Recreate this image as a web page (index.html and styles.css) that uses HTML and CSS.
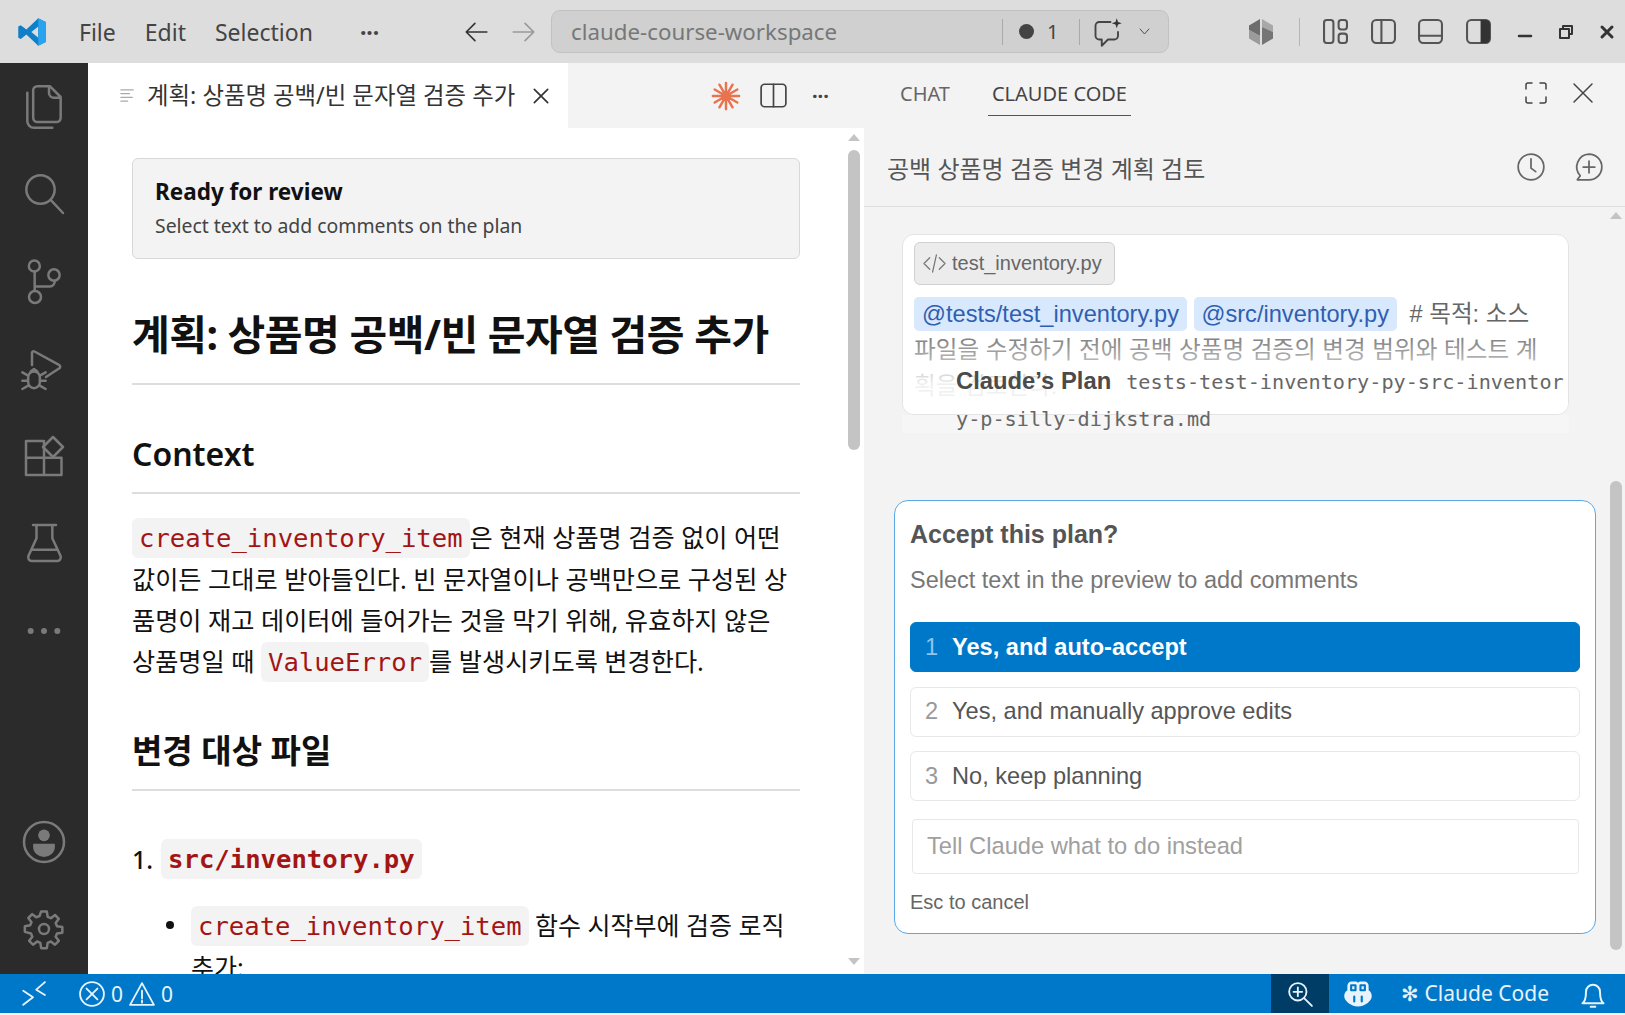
FILE: index.html
```html
<!DOCTYPE html>
<html lang="ko">
<head>
    <meta charset="UTF-8">
    <meta name="viewport" content="width=device-width, initial-scale=1.0">
    <title>claude-course-workspace</title>
    <link rel="stylesheet" href="styles.css">
</head>
<body>
    <div class="titlebar">
        <svg class="logo" viewBox="0 0 24 24"><path fill="#0f7fc9" d="M17 1l6 3v16l-6 3L7.5 14 3 17.5 1 16.5v-9L3 6.500 7.5 10zM17 7.500L11.5 12l5.5 4.5z"/><path fill="#2aa3ee" d="M17 1l6 3v16l-6 3z"/></svg>
        <div class="menu">
            <span>File</span>
            <span>Edit</span>
            <span>Selection</span>
            <span class="menu-more">···</span>
        </div>
        <div class="nav">
            <svg class="ico" viewBox="0 0 24 24"><path d="M22 12H3M11 4l-8 8 8 8"/></svg>
            <svg class="ico dim" viewBox="0 0 24 24"><path d="M2 12h19M13 4l8 8-8 8"/></svg>
        </div>
        <div class="command">
            <span class="command-text">claude-course-workspace</span>
            <span class="command-sep"></span>
            <span class="dot"></span>
            <span class="command-num">1</span>
            <span class="command-sep"></span>
            <svg class="ico chat-ico" viewBox="0 0 24 24"><path d="M14 4H5a3 3 0 0 0-3 3v8a3 3 0 0 0 3 3h2v5l5-5h5a3 3 0 0 0 3-3v-3"/><path class="fill" d="M19 1l1 3 3 1-3 1-1 3-1-3-3-1 3-1z"/></svg>
            <svg class="ico chev" viewBox="0 0 24 24"><path d="M5 8l7 8 7-8"/></svg>
        </div>
        <div class="title-right">
            <svg class="gem" viewBox="0 0 28 28"><path fill="#6d6d6d" d="M13 1L2 7.5V12l11 6z"/><path fill="#9b9b9b" d="M2 12l11 6v9L2 20.500z"/><path fill="#a8a8a8" d="M15 1l11 6.500V14L15 9z"/><path fill="#757575" d="M15 9l11 5v6.500L15 27z"/></svg>
            <span class="title-sep"></span>
            <div class="layout-btns">
                <svg class="ico lay" viewBox="0 0 24 24"><rect x="1" y="1" width="9" height="22" rx="2.5"/><rect x="15" y="1" width="8" height="9" rx="2.5"/><rect x="15" y="14" width="8" height="9" rx="2.5"/></svg>
                <svg class="ico lay" viewBox="0 0 24 24"><rect x="1" y="1" width="22" height="22" rx="4"/><path d="M10 1v22"/></svg>
                <svg class="ico lay" viewBox="0 0 24 24"><rect x="1" y="1" width="22" height="22" rx="4"/><path d="M1 16h22"/></svg>
                <svg class="ico lay" viewBox="0 0 24 24"><rect x="1" y="1" width="22" height="22" rx="4"/><path class="fill" d="M14 1h5a4 4 0 0 1 4 4v14a4 4 0 0 1-4 4h-5z"/></svg>
            </div>
            <div class="window-btns">
                <svg class="win" viewBox="0 0 14 14"><path d="M1 11h12"/></svg>
                <svg class="win thin" viewBox="0 0 14 14"><path d="M4 4V1h9v8h-3M1 4h9v9H1z"/></svg>
                <svg class="win bold" viewBox="0 0 14 14"><path d="M2 2l10 10M12 2L2 12"/></svg>
            </div>
        </div>
    </div>

    <div class="workbench">
        <div class="activity">
            <div class="activity-top">
                <svg class="act" viewBox="0 0 24 24"><path d="M8-.5h7.500l6.500 6.500v12.500a2.500 2.500 0 0 1-2.500 2.500H8a2.500 2.500 0 0 1-2.500-2.500V2A2.500 2.500 0 0 1 8-.5zM15-.5v4a3 3 0 0 0 3 3h4"/><path d="M2 3.500v17a4 4 0 0 0 4 4h11"/></svg>
                <svg class="act" viewBox="0 0 24 24"><circle cx="9.900" cy="9.300" r="8.500"/><path d="M16 15.500l7.400 7.900"/></svg>
                <svg class="act" viewBox="0 0 24 24"><circle cx="6.200" cy="2.400" r="3.300"/><circle cx="6.600" cy="21" r="3.600"/><circle cx="18" cy="7.800" r="3.400"/><path d="M6.400 5.700v11.700M6.400 14.700h9a3 3 0 0 0 3-3.500"/></svg>
                <svg class="act" viewBox="0 0 24 24"><path d="M4.800 9.600V2.500a1 1 0 0 1 1.500-1L21 9.500a1.200 1.200 0 0 1 0 2.200L13.200 16.800"/><path d="M2.500 17a3.500 3.500 0 0 1 7 0v3a3.500 3.500 0 0 1-7 0zM-1 14l3.500 2M-1 19h3.500M-1 24l3.500-2M13 14l-3.500 2M13 19H9.500M13 24l-3.500-2M4 13.500L6 12l2 1.500"/></svg>
                <svg class="act" viewBox="0 0 24 24"><path d="M1.200 3H12v20.400H1.200zM1.200 13h21.300v10.400H12M12 13v-3"/><path d="M17.400.600l6 6-6 6-6-6z"/></svg>
                <svg class="act" viewBox="0 0 24 24"><path d="M5.400 1.200h13.800M7.500 1.200v8L2.800 19.500a2.200 2.200 0 0 0 2 3.300h15a2.200 2.200 0 0 0 2-3.300L17 9.200v-8M5.200 16h14.200"/></svg>
                <svg class="act small" viewBox="0 0 24 24"><circle class="fill" cx="4" cy="12" r="1.800"/><circle class="fill" cx="12" cy="12" r="1.800"/><circle class="fill" cx="20" cy="12" r="1.800"/></svg>
            </div>
            <div class="activity-bottom">
                <svg class="act" viewBox="0 0 24 24"><circle cx="12" cy="12" r="12"/><circle class="fill" cx="12" cy="8" r="3.500"/><path class="fill" d="M5.500 13h13v2a6.500 6 0 0 1-13 0z"/></svg>
                <svg class="act" viewBox="0 0 24 24"><path d="M10.300 1.500h3.400l.5 3.200 1.900.8 2.500-1.900 2.300 2.300-1.900 2.500.8 1.900 3.200.5v3.400l-3.200.5-.8 1.900 1.900 2.500-2.300 2.300-2.500-1.900-1.900.8-.5 3.200h-3.400l-.5-3.200-1.900-.8-2.500 1.900-2.300-2.300 1.900-2.500-.8-1.900L.5 13.700v-3.400l3.200-.5.8-1.900-1.900-2.500 2.300-2.300 2.500 1.900 1.900-.8z"/><circle cx="12" cy="12" r="3"/></svg>
            </div>
        </div>

        <div class="editor">
            <div class="tabs">
                <div class="tab">
                    <svg class="tab-ico" viewBox="0 0 16 16"><path d="M1 2h13M1 6h9M1 10h12M1 14h7"/></svg>
                    <span class="tab-title">계획: 상품명 공백/빈 문자열 검증 추가</span>
                    <svg class="ico tab-close" viewBox="0 0 24 24"><path d="M4 4l16 16M20 4L4 20"/></svg>
                </div>
                <div class="tab-actions">
                    <svg class="spark" viewBox="0 0 32 32"><path d="M30 16H2M28.100 9L3.900 23M23 3.900L9 28.100M16 2v28M9 3.900l14 24.200M3.900 9l24.200 14"/></svg>
                    <svg class="ico split" viewBox="0 0 24 24"><rect x="1" y="2" width="22" height="20" rx="3"/><path d="M12 2v20"/></svg>
                    <span class="more">···</span>
                </div>
            </div>
            <div class="editor-body">
                <div class="doc">
                    <div class="review">
                        <div class="review-title">Ready for review</div>
                        <div class="review-sub">Select text to add comments on the plan</div>
                    </div>
                    <h1>계획: 상품명 공백/빈 문자열 검증 추가</h1>
                    <h2 class="latin">Context</h2>
                    <p><code>create_inventory_item</code>은 현재 상품명 검증 없이 어떤 값이든 그대로 받아들인다. 빈 문자열이나 공백만으로 구성된 상품명이 재고 데이터에 들어가는 것을 막기 위해, 유효하지 않은<br>상품명일 때 <code>ValueError</code>를 발생시키도록 변경한다.</p>
                    <h2>변경 대상 파일</h2>
                    <div class="file-item"><span class="file-num">1.</span><code class="strong">src/inventory.py</code></div>
                    <div class="bullet">
                        <span class="bullet-dot"></span>
                        <div class="bullet-text"><code>create_inventory_item</code> 함수 시작부에 검증 로직 추가:</div>
                    </div>
                </div>
                <div class="scrollbar">
                    <span class="arrow up"></span>
                    <span class="thumb"></span>
                    <span class="arrow down"></span>
                </div>
            </div>
        </div>

        <div class="panel">
            <div class="panel-tabs">
                <span class="panel-tab">CHAT</span>
                <span class="panel-tab active">CLAUDE CODE</span>
                <div class="panel-tools">
                    <svg class="ico tool" viewBox="0 0 24 24"><path d="M2 8V4a2 2 0 0 1 2-2h4M16 2h4a2 2 0 0 1 2 2v4M22 16v4a2 2 0 0 1-2 2h-4M8 22H4a2 2 0 0 1-2-2v-4"/></svg>
                    <svg class="ico tool" viewBox="0 0 24 24"><path d="M3 3l18 18M21 3L3 21"/></svg>
                </div>
            </div>
            <div class="session">
                <span class="session-title">공백 상품명 검증 변경 계획 검토</span>
                <div class="session-tools">
                    <svg class="ico hist" viewBox="0 0 24 24"><circle cx="12" cy="12" r="11"/><path d="M12 5v8l4 3"/></svg>
                    <svg class="ico hist" viewBox="0 0 24 24"><path d="M12 1a11 11 0 0 1 0 22H2l2.500-3.500A11 11 0 0 1 12 1zM12 7v10M7 12h10"/></svg>
                </div>
            </div>
            <div class="panel-body">
                <div class="thread">
                    <div class="message">
                        <div class="chip"><svg class="chip-ico" viewBox="0 0 24 24"><path d="M7 6l-6 6 6 6M17 6l6 6-6 6M14 3l-4 18"/></svg>test_inventory.py</div>
                        <div class="message-text"><span class="mention">@tests/test_inventory.py</span> <span class="mention">@src/inventory.py</span> <span class="message-plain"># 목적: 소스 파일을 수정하기 전에 공백 상품명 검증의 변경 범위와 테스트 계획을 검토한다.</span></div>
                        <div class="fade"></div>
                    </div>
                    <div class="message-band"></div>
                    <div class="plan-note"><b>Claude’s Plan</b><span>tests-test-inventory-py-src-inventory-p-silly-dijkstra.md</span></div>
                    <div class="accept">
                        <div class="accept-title">Accept this plan?</div>
                        <div class="accept-sub">Select text in the preview to add comments</div>
                        <div class="option selected"><span class="option-num">1</span>Yes, and auto-accept</div>
                        <div class="option"><span class="option-num">2</span>Yes, and manually approve edits</div>
                        <div class="option"><span class="option-num">3</span>No, keep planning</div>
                        <div class="instead">Tell Claude what to do instead</div>
                        <div class="esc">Esc to cancel</div>
                    </div>
                </div>
                <div class="scrollbar panel-scroll">
                    <span class="arrow up"></span>
                    <span class="thumb"></span>
                </div>
            </div>
        </div>
    </div>

    <div class="statusbar">
        <svg class="st remote" viewBox="0 0 24 24"><path d="M3 22l9-7-9-6M23 1l-8 7 8 5"/></svg>
        <div class="st-problems">
            <svg class="st" viewBox="0 0 24 24"><circle cx="12" cy="12" r="11"/><path d="M7 7l10 10M17 7L7 17"/></svg>
            <span>0</span>
            <svg class="st" viewBox="0 0 24 24"><path d="M12 2L1 22h22zM12 9v7M12 18v2"/></svg>
            <span>0</span>
        </div>
        <div class="st-right">
            <div class="st-zoom"><svg class="st" viewBox="0 0 24 24"><circle cx="10" cy="10" r="8"/><path d="M16 16l7 7M10 6v8M6 10h8"/></svg></div>
            <svg class="st copilot" viewBox="0 0 24 24"><path class="stfill" d="M7 2h3a3 3 0 0 1 2 1 3 3 0 0 1 2-1h3a3.500 3.500 0 0 1 3.500 4v3c2 1 2.500 3 2.500 5 0 3-5 8-11 8S1 17 1 14c0-2 .5-4 2.500-5V6A3.500 3.500 0 0 1 7 2z"/><path class="stcut" d="M9 14v4M15 14v4M6.500 5h3.500v4H6.500zM14 5h3.500v4H14z"/></svg>
            <span class="st-claude">✻ Claude Code</span>
            <svg class="st bell" viewBox="0 0 24 24"><path d="M3 20c2.500-2 3-5 3-10a6 6 0 0 1 12 0c0 5 .5 8 3 10zM10 23h4"/></svg>
        </div>
    </div>
</body>
</html>
```

FILE: styles.css
```css
* {
    box-sizing: border-box;
}
html, body {
    height: 100%;
}
body {
    margin: 0;
    overflow: hidden;
    background: #f5f5f5;
    font-family: "Noto Sans", "Noto Sans CJK KR", sans-serif;
    color: #111;
}
svg {
    flex: none;
    display: block;
    overflow: visible;
}
.ico, .act, .st, .win, .tab-ico, .chip-ico {
    fill: none;
    stroke-linecap: round;
    stroke-linejoin: round;
}
.ico {
    stroke: #444;
    stroke-width: 1.5;
    width: 24px;
    height: 24px;
}
.ico .fill {
    fill: #333;
    stroke: none;
}

/* title bar */
.titlebar {
    display: flex;
    align-items: center;
    height: 63px;
    background: #dddddd;
    padding-left: 17px;
}
.logo {
    width: 30px;
    height: 30px;
}
.menu {
    display: flex;
    align-items: center;
    gap: 29px;
    margin-left: 32px;
    width: 384px;
    font-size: 23px;
    color: #444;
}
.menu-more {
    margin-left: 18px;
    font-weight: 700;
}
.nav {
    display: flex;
    gap: 22px;
    margin-right: 14px;
}
.nav .ico {
    width: 26px;
    height: 26px;
    stroke: #333;
}
.nav .dim {
    stroke: #999;
}
.command {
    display: flex;
    align-items: center;
    width: 618px;
    height: 43px;
    padding-left: 19px;
    background: #d0d0d0;
    border: 1px solid #c2c2c2;
    border-radius: 9px;
}
.command-text {
    width: 431px;
    font-size: 22.3px;
    color: #777;
}
.command-sep {
    width: 1px;
    height: 26px;
    background: #aaa;
}
.dot {
    width: 15px;
    height: 15px;
    margin-left: 16px;
    border-radius: 50%;
    background: #444;
}
.command-num {
    width: 32px;
    margin-left: 13px;
    font-size: 20px;
    color: #444;
}
.chat-ico {
    width: 30px;
    height: 30px;
    margin-left: 13px;
}
.chev {
    width: 15px;
    height: 15px;
    margin-left: 14px;
}
.title-right {
    display: flex;
    align-items: center;
    margin-left: 78px;
}
.gem {
    width: 28px;
    height: 28px;
}
.title-sep {
    width: 1px;
    height: 28px;
    margin: 0 23px 0 24px;
    background: #b5b5b5;
}
.layout-btns {
    display: flex;
    gap: 22.6px;
}
.lay {
    width: 25px;
    height: 25px;
    stroke: #555;
    stroke-width: 2;
}
.window-btns {
    display: flex;
    align-items: center;
    gap: 27px;
    margin-left: 27px;
}
.win {
    width: 14px;
    height: 14px;
    stroke: #333;
    stroke-width: 2.5;
}
.win.thin {
    stroke-width: 2;
}
.win.bold {
    stroke-width: 3;
}

/* main area */
.workbench {
    display: flex;
    height: 911px;
}
.activity {
    display: flex;
    flex-direction: column;
    justify-content: space-between;
    width: 88px;
    padding: 24px 0 25px;
    background: #2b2b2b;
}
.activity-top, .activity-bottom {
    display: flex;
    flex-direction: column;
    align-items: center;
    gap: 47.3px;
}
.activity-bottom {
    gap: 47px;
}
.act {
    width: 40px;
    height: 40px;
    stroke: #7a7a7a;
    stroke-width: 1.5;
}
.act .fill {
    fill: #7a7a7a;
    stroke: none;
}

/* editor */
.editor {
    display: flex;
    flex-direction: column;
    width: 776px;
    background: #fff;
}
.tabs {
    display: flex;
    height: 65px;
    background: #f3f3f3;
}
.tab {
    display: flex;
    align-items: center;
    width: 480px;
    padding-left: 32px;
    background: #fff;
}
.tab-ico {
    width: 15px;
    height: 15px;
    stroke: #aaa;
    stroke-width: 1.5;
}
.tab-title {
    margin: 0 0 4px 12px;
    font-size: 23.4px;
    color: #333;
    white-space: nowrap;
}
.tab-close {
    width: 20px;
    height: 20px;
    margin-left: 16px;
    stroke: #333;
    stroke-width: 2;
}
.tab-actions {
    display: flex;
    align-items: center;
    gap: 19px;
    padding-left: 143px;
}
.spark {
    width: 30px;
    height: 30px;
    fill: none;
    stroke: #e8734f;
    stroke-width: 2.6;
    stroke-linecap: round;
}
.split {
    width: 27px;
    height: 27px;
}
.more {
    margin-left: 6px;
    font-size: 20px;
    font-weight: 700;
    color: #444;
}
.editor-body {
    display: flex;
    height: 846px;
    overflow: hidden;
}
.doc {
    flex: 1;
    padding: 30px 46px 0 44px;
    overflow: hidden;
}
.review {
    height: 101px;
    padding: 18px 22px 0;
    background: #f3f3f3;
    border: 1px solid #d8d8d8;
    border-radius: 6px;
}
.review-title {
    font-size: 22.5px;
    line-height: 30px;
    font-weight: 700;
}
.review-sub {
    margin-top: 5px;
    font-size: 19.4px;
    line-height: 27px;
    color: #444;
}
h1 {
    margin: 43px 0 0;
    padding-bottom: 17px;
    border-bottom: 2px solid #ddd;
    font-size: 41px;
    line-height: 64px;
    font-weight: 700;
    letter-spacing: -0.5px;
    white-space: nowrap;
}
h2 {
    margin: 0;
    padding-bottom: 14px;
    border-bottom: 2px solid #ddd;
    font-size: 33px;
    line-height: 48px;
    font-weight: 700;
}
h2.latin {
    margin-top: 45px;
    font-size: 32px;
    font-weight: 600;
}
p {
    margin: 23px 0 0;
    font-size: 25.2px;
    line-height: 41px;
}
p + h2 {
    margin-top: 44px;
}
code {
    padding: 5px 7px;
    border-radius: 6px;
    background: #f3f3f3;
    color: #a31515;
    font-family: "DejaVu Sans Mono", monospace;
    font-size: 25.6px;
}
code.strong {
    font-weight: 700;
}
.file-item {
    display: flex;
    align-items: center;
    height: 41px;
    margin-top: 47px;
    font-size: 25px;
    font-weight: 500;
}
.file-num {
    margin-right: 8px;
}
.bullet {
    display: flex;
    margin-top: 26px;
}
.bullet-dot {
    flex: none;
    width: 8px;
    height: 8px;
    margin: 16px 17px 0 34px;
    border-radius: 50%;
    background: #111;
}
.bullet-text {
    font-size: 25px;
    line-height: 41px;
}
.scrollbar {
    display: flex;
    flex-direction: column;
    align-items: center;
    flex: none;
    width: 16px;
    margin-right: 2px;
    padding-top: 6px;
}
.arrow {
    width: 0;
    height: 0;
    border-left: 6px solid transparent;
    border-right: 6px solid transparent;
}
.arrow.up {
    border-bottom: 7px solid #c4c4c4;
}
.arrow.down {
    margin-top: 508px;
    border-top: 7px solid #c4c4c4;
}
.thumb {
    width: 12px;
    height: 300px;
    margin-top: 9px;
    border-radius: 6px;
    background: #c4c4c4;
}

/* right panel */
.panel {
    display: flex;
    flex-direction: column;
    width: 761px;
    background: #f3f3f3;
}
.panel-tabs {
    display: flex;
    height: 63px;
    padding: 0 0 0 32px;
}
.panel-tab {
    height: 53px;
    padding: 16px 4px 0;
    margin-right: 34px;
    font-size: 20px;
    line-height: 30px;
    color: #666;
}
.panel-tab.active {
    color: #444;
    border-bottom: 1px solid #555;
}
.panel-tools {
    display: flex;
    align-items: center;
    gap: 23px;
    margin-left: auto;
    padding: 0 30px 4px 0;
}
.tool {
    width: 24px;
    height: 24px;
}
.session {
    display: flex;
    align-items: center;
    height: 81px;
    padding: 2px 22px 0 23px;
    border-bottom: 1px solid #ddd;
}
.session-title {
    font-size: 24px;
    color: #555;
}
.session-tools {
    display: flex;
    gap: 30px;
    margin-left: auto;
}
.hist {
    width: 28px;
    height: 28px;
    stroke: #666;
}
.panel-body {
    display: flex;
    height: 767px;
    overflow: hidden;
    font-family: "Liberation Sans", "Noto Sans CJK KR", sans-serif;
}
.thread {
    position: relative;
    flex: 1;
    min-width: 0;
    padding: 27px 0 0 30px;
}
.message {
    position: relative;
    height: 181px;
    margin-left: 8px;
    width: 667px;
    padding: 7px 11px 0;
    background: #fff;
    border: 1px solid #e4e4e4;
    border-radius: 12px;
    overflow: hidden;
}
.message-band {
    width: 667px;
    height: 18px;
    margin-left: 8px;
    background: #f6f6f6;
}
.chip {
    display: flex;
    align-items: center;
    gap: 6px;
    width: 201px;
    height: 43px;
    padding-left: 8px;
    background: #ececec;
    border: 1px solid #d0d0d0;
    border-radius: 6px;
    font-size: 20px;
    color: #666;
}
.chip-ico {
    width: 23px;
    height: 23px;
    stroke: #777;
    stroke-width: 1.3;
}
.message-text {
    margin-top: 11px;
    font-size: 23.6px;
    line-height: 36px;
}
.mention {
    padding: 4px 8px;
    border-radius: 5px;
    background: #d8e8fd;
    color: #2f5fb0;
}
.message-plain {
    margin-left: 6px;
    color: #666;
}
.fade {
    position: absolute;
    left: 0;
    right: 0;
    top: 92px;
    height: 88px;
    background: linear-gradient(rgba(255, 255, 255, 0), rgba(255, 255, 255, 0.9) 65%);
}
.plan-note {
    position: absolute;
    left: 60px;
    top: 156px;
    width: 640px;
    padding-left: 32px;
    font-size: 23.8px;
    line-height: 35px;
    font-weight: 700;
    color: #4b4b4b;
    word-break: break-all;
}
.plan-note span {
    margin-left: 15px;
    font-family: "DejaVu Sans Mono", monospace;
    font-size: 20.2px;
    font-weight: 400;
    color: #666;
}
.accept {
    width: 702px;
    height: 434px;
    margin-top: 67px;
    padding: 15px 15px 0;
    background: #fff;
    border: 1.5px solid #5aa9e6;
    border-radius: 14px;
}
.accept-title {
    font-size: 25px;
    line-height: 36px;
    font-weight: 700;
    color: #555;
}
.accept-sub {
    margin-top: 11px;
    font-size: 23.5px;
    line-height: 34px;
    color: #777;
}
.option {
    display: flex;
    align-items: center;
    height: 50px;
    margin-bottom: 14.6px;
    padding-left: 14px;
    background: #fff;
    border: 1px solid #e8e8e8;
    border-radius: 6px;
    font-size: 23.6px;
    color: #555;
}
.accept-sub + .option {
    margin-top: 25px;
}
.option.selected {
    background: #0078ca;
    border-color: #0078ca;
    font-weight: 700;
    color: #fff;
}
.option-num {
    width: 27px;
    font-weight: 400;
    color: #999;
}
.selected .option-num {
    color: #8fc4ee;
}
.instead {
    display: flex;
    align-items: center;
    height: 55px;
    margin: 18px 1px 0 2px;
    padding-left: 14px;
    border: 1px solid #e8e8e8;
    border-radius: 4px;
    font-size: 23.7px;
    color: #a0a0a0;
}
.esc {
    margin-top: 14px;
    font-size: 20px;
    line-height: 28px;
    color: #666;
}
.panel-scroll {
    padding-top: 5px;
    margin-right: 1px;
}
.panel-scroll .thumb {
    height: 469px;
    margin-top: 262px;
}

/* status bar */
.statusbar {
    display: flex;
    align-items: center;
    height: 39px;
    padding-left: 20px;
    background: #0078ca;
    color: #e8f3fb;
}
.st {
    width: 26px;
    height: 26px;
    stroke: #e8f3fb;
    stroke-width: 1.7;
}
.st-problems {
    display: flex;
    align-items: center;
    gap: 6px;
    margin-left: 33px;
    font-size: 21px;
}
.st-right {
    display: flex;
    align-items: center;
    align-self: stretch;
    margin-left: auto;
}
.st-zoom {
    display: flex;
    align-items: center;
    justify-content: center;
    align-self: stretch;
    width: 58px;
    background: #003d66;
}
.copilot {
    width: 30px;
    height: 30px;
    margin-left: 14px;
}
.stfill {
    fill: #e8f3fb;
    stroke: none;
}
.stcut {
    stroke: #0078ca;
}
.st-claude {
    margin-left: 28px;
    font-size: 21px;
    line-height: 39px;
}
.bell {
    width: 28px;
    height: 28px;
    margin: 0 18px 0 30px;
}
```
